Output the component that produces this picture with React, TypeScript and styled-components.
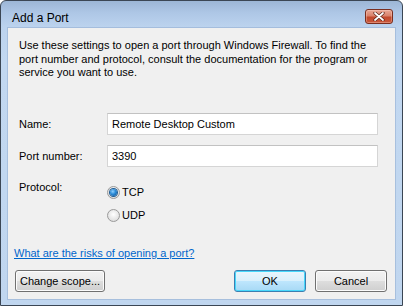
import React, { FC } from 'react';
import styled, { createGlobalStyle } from 'styled-components';

const GlobalStyle = createGlobalStyle`
    html, body {
        margin: 0;
        padding: 0;
        background: #ffffff;
    }
    body {
        font-family: "Liberation Sans", Arial, sans-serif;
        font-size: 11px;
        color: #000;
    }
`;

const Window = styled.div`
    width: 403px;
    height: 306px;
    box-sizing: border-box;
    border: 1px solid #3b4654;
    border-radius: 6px 6px 0 0;
    background: linear-gradient(180deg, #9cb6d6 0px, #aec7e6 12px, #bcd3ee 26px, #c2d8f1 60px, #c0d6ef 100%);
    display: flex;
    flex-direction: column;
    overflow: hidden;
`;

const TitleBar = styled.div`
    height: 27px;
    display: flex;
    align-items: flex-start;
    justify-content: space-between;
    padding: 0 9px 0 11px;
`;

const Title = styled.div`
    font-size: 12px;
    line-height: 14px;
    margin-top: 10px;
    color: #000;
`;

const CloseButton = styled.div`
    width: 26px;
    height: 13px;
    margin-top: 8px;
    border: 1px solid #7a2e1f;
    border-radius: 3px;
    background: linear-gradient(180deg, #e9a896 0%, #d9826b 45%, #c2492d 55%, #c9583c 100%);
    display: flex;
    align-items: center;
    justify-content: center;
    box-shadow: inset 0 0 0 1px rgba(255, 220, 210, 0.35);
`;

const Client = styled.div`
    flex: 1;
    margin: 0 7px 6px 7px;
    background: #f0f0f0;
    box-shadow: 0 0 0 1px rgba(120, 150, 190, 0.35);
    display: flex;
    flex-direction: column;
`;

const Intro = styled.p`
    margin: 11px 0 0 11px;
    height: 41px;
    line-height: 13.5px;
    white-space: nowrap;
`;

const Form = styled.div`
    margin: 33px 0 0 11px;
    display: grid;
    grid-template-columns: 88px 271px;
    row-gap: 10px;
    align-items: center;
`;

const Label = styled.div<{ $top?: boolean }>`
    align-self: ${(p) => (p.$top ? 'start' : 'center')};
    margin-top: ${(p) => (p.$top ? '2px' : '0')};
    line-height: 16px;
`;

const TextBox = styled.input`
    height: 22px;
    box-sizing: border-box;
    border: 1px solid #d5d5d5;
    border-top-color: #c2c2c2;
    background: #fff;
    padding: 0 4px;
    font: inherit;
    color: #000;
    outline: none;
`;

const Radios = styled.div`
    display: flex;
    flex-direction: column;
    gap: 10px;
    padding-top: 8.5px;
`;

const RadioRow = styled.label`
    display: flex;
    align-items: center;
    gap: 2px;
    height: 13px;
    line-height: 13px;
`;

const RadioCircle = styled.span<{ $checked?: boolean }>`
    width: 13px;
    height: 13px;
    box-sizing: border-box;
    border-radius: 50%;
    border: 1px solid #9a9a9a;
    background: radial-gradient(circle at 50% 40%, #ffffff 0%, #e6e6e6 60%, #d2d2d2 100%);
    display: flex;
    align-items: center;
    justify-content: center;
    &::after {
        content: '';
        display: ${(p) => (p.$checked ? 'block' : 'none')};
        width: 7px;
        height: 7px;
        border-radius: 50%;
        background: radial-gradient(circle at 40% 35%, #8fd0ff 0%, #2a8ad6 45%, #0b4f8f 100%);
        box-shadow: 0 0 0 1px #1e5b92;
    }
`;

const Link = styled.a`
    margin: 23.5px 0 0 6px;
    color: #0066cc;
    text-decoration: underline;
    line-height: 16px;
    cursor: pointer;
    align-self: flex-start;
`;

const ButtonRow = styled.div`
    margin: 9px 8px 0 7px;
    display: flex;
    align-items: center;
`;

const Spacer = styled.div`
    flex: 1;
`;

const Button = styled.button<{ $default?: boolean; $w: number }>`
    width: ${(p) => p.$w}px;
    height: 22px;
    box-sizing: border-box;
    border: 1px solid ${(p) => (p.$default ? '#3c7fb1' : '#707070')};
    border-radius: 3px;
    font: inherit;
    color: #000;
    padding: 0;
    margin-left: ${(p) => (p.$default ? '0' : '9px')};
    background: ${(p) =>
        p.$default
            ? 'linear-gradient(180deg, #eaf6fd 0%, #d9f0fc 50%, #bee6fd 51%, #a7d9f5 100%)'
            : 'linear-gradient(180deg, #f2f2f2 0%, #ebebeb 50%, #dddddd 51%, #cfcfcf 100%)'};
    box-shadow: inset 0 0 0 1px ${(p) => (p.$default ? '#48d8fb' : '#fcfcfc')};
    &:first-child {
        margin-left: 0;
    }
`;

const App: FC = () => {
    return (
        <>
            <GlobalStyle />
            <Window>
                <TitleBar>
                    <Title>Add a Port</Title>
                    <CloseButton>
                        <svg width="12" height="9" viewBox="0 0 12 9">
                            <path
                                d="M2 1 L10 8 M10 1 L2 8"
                                stroke="#5a2418"
                                strokeWidth="3.2"
                                strokeLinecap="round"
                            />
                            <path
                                d="M2 1 L10 8 M10 1 L2 8"
                                stroke="#ffffff"
                                strokeWidth="1.8"
                                strokeLinecap="round"
                            />
                        </svg>
                    </CloseButton>
                </TitleBar>
                <Client>
                    <Intro>
                        Use these settings to open a port through Windows Firewall. To find the
                        <br />
                        port number and protocol, consult the documentation for the program or
                        <br />
                        service you want to use.
                    </Intro>
                    <Form>
                        <Label>Name:</Label>
                        <TextBox defaultValue="Remote Desktop Custom" />
                        <Label>Port number:</Label>
                        <TextBox defaultValue="3390" />
                        <Label $top>Protocol:</Label>
                        <Radios>
                            <RadioRow>
                                <RadioCircle $checked />
                                TCP
                            </RadioRow>
                            <RadioRow>
                                <RadioCircle />
                                UDP
                            </RadioRow>
                        </Radios>
                    </Form>
                    <Link>What are the risks of opening a port?</Link>
                    <ButtonRow>
                        <Button $w={90}>Change scope...</Button>
                        <Spacer />
                        <Button $default $w={72}>
                            OK
                        </Button>
                        <Button $w={72}>Cancel</Button>
                    </ButtonRow>
                </Client>
            </Window>
        </>
    );
};

export default App;
